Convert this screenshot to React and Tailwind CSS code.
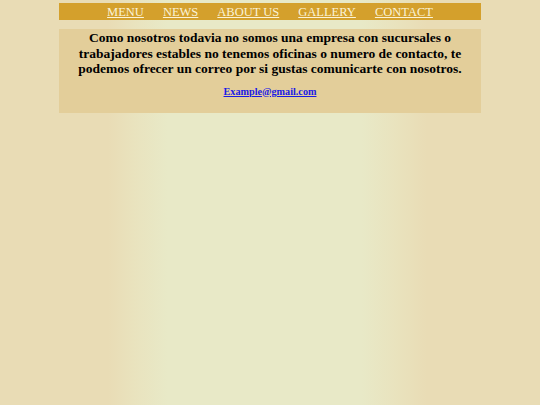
export default function App() {
  const links = ["MENU", "NEWS", "ABOUT US", "GALLERY", "CONTACT"];

  return (
    <div
      className="min-h-[405px] w-full pt-[3px] bg-[linear-gradient(to_right,#e9dcb5_0%,#e9dcb5_20%,#e9e3be_25%,#e8e9c7_31%,#e8e9c7_67%,#e9e3be_73%,#e9dcb5_79%,#e9dcb5_100%)]"
      style={{ fontFamily: '"Liberation Serif", "Times New Roman", serif' }}
    >
      <div className="mx-auto w-[422px]">
        <nav className="flex h-[17px] items-center justify-center gap-[19px] bg-[#d4a02c] pt-[2px]">
          {links.map((label) => (
            <a
              key={label}
              href="#"
              className="text-[12.5px] leading-none text-[#fbf3d6] underline"
            >
              {label}
            </a>
          ))}
        </nav>

        <div className="mt-[9px] h-[84px] bg-[#e3ce9a] px-3 pt-[1px] text-center">
          <p className="text-[13.5px] font-bold leading-[15.5px] text-black">
            Como nosotros todavia no somos una empresa con sucursales o
            trabajadores estables no tenemos oficinas o numero de contacto, te
            podemos ofrecer un correo por si gustas comunicarte con nosotros.
          </p>
          <a
            href="#"
            className="mt-[7px] inline-block text-[10.2px] font-bold text-[#1a1ae6] underline"
          >
            Example@gmail.com
          </a>
        </div>
      </div>
    </div>
  );
}
